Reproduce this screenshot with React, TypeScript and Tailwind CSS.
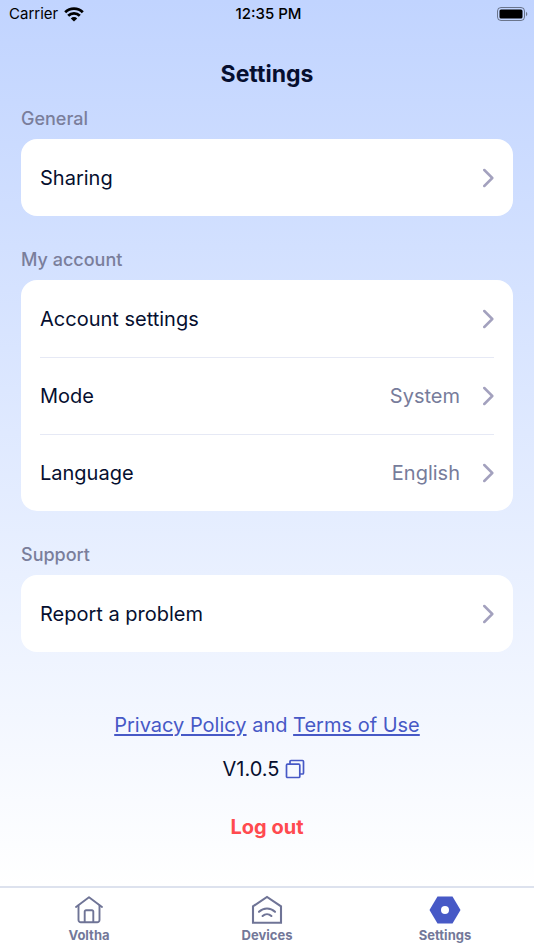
import React from "react";

type Row = { label: string; value?: string };
type Section = { title: string; rows: Row[] };

const sections: Section[] = [
  { title: "General", rows: [{ label: "Sharing" }] },
  {
    title: "My account",
    rows: [
      { label: "Account settings" },
      { label: "Mode", value: "System" },
      { label: "Language", value: "English" },
    ],
  },
  { title: "Support", rows: [{ label: "Report a problem" }] },
];

function WifiIcon() {
  return (
    <svg width="20" height="15" viewBox="0 0 20 15" fill="none" stroke="#000" strokeWidth="2.8" aria-hidden="true">
      <path d="M1.200 5.200a12.600 12.600 0 0 1 17.600 0" />
      <path d="M4.200 8.700a8.200 8.200 0 0 1 11.600 0" />
      <path d="M10 14.500 6.800 11.400a4.500 4.500 0 0 1 6.400 0z" fill="#000" stroke="none" />
    </svg>
  );
}

function BatteryIcon() {
  return (
    <svg width="32" height="16" viewBox="0 0 32 16" aria-hidden="true">
      <rect x="1.5" y="1.5" width="27" height="13" rx="3.5" fill="none" stroke="#000" strokeOpacity="0.45" />
      <rect x="3.5" y="3.5" width="23" height="9" rx="1.5" fill="#000" />
      <path d="M30 5.800c1.800.8 1.800 3.600 0 4.400z" fill="#000" fillOpacity="0.45" />
    </svg>
  );
}

function Chevron() {
  return (
    <svg width="12" height="20" viewBox="0 0 12 20" fill="none" stroke="#a3a1be" strokeWidth="2.5" strokeLinecap="round" strokeLinejoin="round" aria-hidden="true">
      <path d="m2.300 2 8 8-8 8" />
    </svg>
  );
}

function CopyIcon() {
  return (
    <svg width="20" height="20" viewBox="0 0 20 20" fill="none" stroke="#4759c6" strokeWidth="1.7" strokeLinejoin="round" aria-hidden="true">
      <rect x="1.500" y="5.200" width="13.300" height="13.300" rx="1" />
      <path d="M5 5V2.500a1 1 0 0 1 1-1h11.500a1 1 0 0 1 1 1V14a1 1 0 0 1-1 1H15" />
    </svg>
  );
}

function HomeIcon() {
  return (
    <svg width="32" height="30" viewBox="0 0 32 30" fill="none" stroke="#6f7496" strokeWidth="1.9" strokeLinecap="round" strokeLinejoin="round" aria-hidden="true">
      <path d="M3 12 16 2.200 29 12" />
      <path d="M5.500 10.500V25A2.300 2.300 0 0 0 7.800 27.300h16.400a2.300 2.300 0 0 0 2.300-2.300V10.500" />
      <path d="M11.700 27V16.600a1.300 1.300 0 0 1 1.300-1.300h6a1.300 1.300 0 0 1 1.300 1.300V27" />
    </svg>
  );
}

function DevicesIcon() {
  return (
    <svg width="32" height="30" viewBox="0 0 32 30" fill="none" stroke="#6f7496" strokeWidth="2.1" strokeLinecap="round" aria-hidden="true">
      <path d="M2 27.800V11.300L16 2l14 9.300v16.500z" />
      <path d="M8 16.800c4.600-4.400 11.400-4.400 16 0" />
      <path d="M11.600 21c2.600-2.400 6.200-2.400 8.800 0" />
    </svg>
  );
}

function SettingsIcon() {
  return (
    <svg width="32" height="30" viewBox="0 0 32 30" aria-hidden="true">
      <path d="M8.500 1.500h15L31.500 15l-8 13.500h-15L.5 15z" fill="#4759c6" />
      <circle cx="16" cy="15" r="4" fill="#fff" />
    </svg>
  );
}

const tabs = [
  { label: "Voltha", icon: <HomeIcon /> },
  { label: "Devices", icon: <DevicesIcon /> },
  { label: "Settings", icon: <SettingsIcon />, current: true },
];

export default function App() {
  return (
    <div className="flex min-h-screen flex-col bg-white font-['Inter','Liberation_Sans',sans-serif] text-[#060f2f]">
      <div className="flex flex-1 flex-col bg-linear-to-b from-[#c1d4ff] to-white">
        <div className="grid h-7 grid-cols-3 items-center pr-1.5 pl-[9px] text-[15px] text-black">
          <div className="flex items-center gap-1.5">
            <span>Carrier</span>
            <WifiIcon />
          </div>
          <span className="text-center font-medium">12:35 PM</span>
          <div className="flex justify-end">
            <BatteryIcon />
          </div>
        </div>

        <header className="pt-8">
          <h1 className="text-center text-[23px] leading-7 font-bold">Settings</h1>
        </header>

        <main className="flex flex-1 flex-col px-[21px] pt-[19px]">
          <div className="flex flex-col gap-8">
            {sections.map((section) => (
              <section key={section.title}>
                <h2 className="text-[18px] leading-6 font-medium text-[#7a7e9b]">{section.title}</h2>
                <ul className="mt-2 rounded-2xl bg-white px-[19px]">
                  {section.rows.map((row, i) => (
                    <li key={row.label} className={i > 0 ? "h-[77px] border-t border-[#e6e9f5]" : "h-[77px]"}>
                      <button type="button" className="flex h-full w-full items-center text-left text-[20px]">
                        <span className="flex-1">{row.label}</span>
                        {row.value && <span className="mr-[22px] text-[#777c9b]">{row.value}</span>}
                        <Chevron />
                      </button>
                    </li>
                  ))}
                </ul>
              </section>
            ))}
          </div>

          <footer className="flex flex-col items-center pt-[59px] text-[20px] leading-7">
            <p className="text-[#4759c6]">
              <a href="#privacy" className="underline underline-offset-2">Privacy Policy</a> and{" "}
              <a href="#terms" className="underline underline-offset-2">Terms of Use</a>
            </p>
            <div className="mt-4 flex items-center gap-1.5 pr-1.5">
              <span>V1.0.5</span>
              <button type="button" aria-label="Copy version">
                <CopyIcon />
              </button>
            </div>
            <button type="button" className="mt-[30px] font-bold text-[#ff4a4f]">Log out</button>
          </footer>
        </main>
      </div>

      <nav className="grid h-16 grid-cols-3 border-t-2 border-[#dde2ee] bg-white">
        {tabs.map((tab) => (
          <button
            key={tab.label}
            type="button"
            aria-current={tab.current ? "page" : undefined}
            className="flex flex-col items-center pt-[7px] text-[13px] leading-5 font-bold text-[#737899]"
          >
            {tab.icon}
            <span>{tab.label}</span>
          </button>
        ))}
      </nav>
    </div>
  );
}
